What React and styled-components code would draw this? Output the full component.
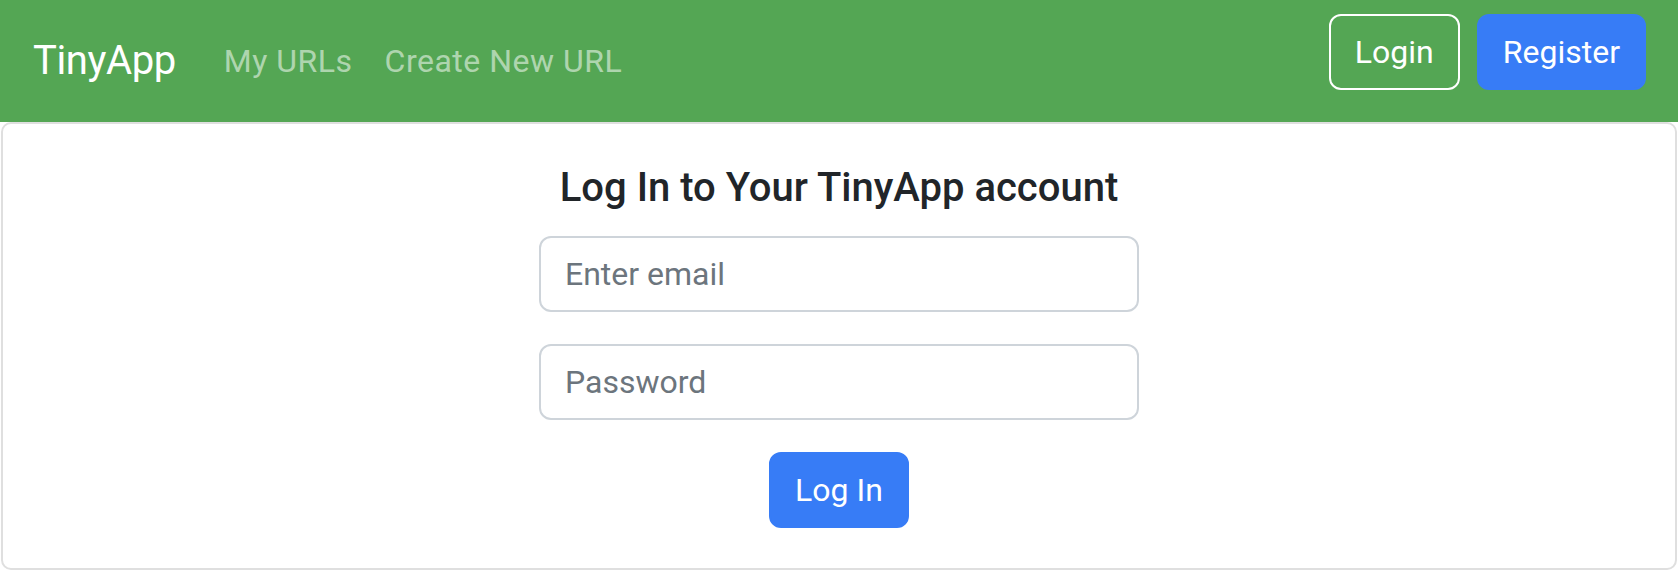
import React from "react";
import styled, { createGlobalStyle } from "styled-components";

const GlobalStyle = createGlobalStyle`
  html, body {
    margin: 0;
    padding: 0;
    background: #fff;
  }
  body {
    font-family: Roboto, "Liberation Sans", Arial, sans-serif;
    color: #212529;
  }
  * {
    box-sizing: border-box;
  }
`;

const App = () => {
  return (
    <>
      <GlobalStyle />
      <Navbar>
        <NavLeft>
          <Brand href="#">TinyApp</Brand>
          <NavLink href="#">My URLs</NavLink>
          <NavLink href="#">Create New URL</NavLink>
        </NavLeft>
        <NavRight>
          <OutlineButton>Login</OutlineButton>
          <PrimaryButton>Register</PrimaryButton>
        </NavRight>
      </Navbar>
      <Card>
        <Title>Log In to Your TinyApp account</Title>
        <Form onSubmit={(e) => e.preventDefault()}>
          <Input type="email" placeholder="Enter email" />
          <Input type="password" placeholder="Password" />
          <SubmitButton type="submit">Log In</SubmitButton>
        </Form>
      </Card>
    </>
  );
};

const Navbar = styled.nav`
  display: flex;
  justify-content: space-between;
  align-items: center;
  height: 122px;
  padding: 0 32px 0 33px;
  background: #54a654;
`;

const NavLeft = styled.div`
  display: flex;
  align-items: center;
`;

const Brand = styled.a`
  font-size: 40px;
  line-height: 60px;
  letter-spacing: -0.4px;
  padding: 10px 0;
  margin-right: 32px;
  color: #fff;
  text-decoration: none;
`;

const NavLink = styled.a`
  font-size: 32px;
  line-height: 48px;
  letter-spacing: 0.5px;
  padding: 16px;
  color: rgba(255, 255, 255, 0.55);
  text-decoration: none;
`;

const NavRight = styled.div`
  display: flex;
  gap: 17px;
  align-self: flex-start;
  padding-top: 14px;
`;

const Button = styled.button`
  font-family: inherit;
  font-size: 32px;
  line-height: 48px;
  padding: 12px 24px;
  border: 2px solid transparent;
  border-radius: 12px;
  color: #fff;
  background: none;
  cursor: pointer;
`;

const OutlineButton = styled(Button)`
  border-color: #fff;
`;

const PrimaryButton = styled(Button)`
  background: #377cf6;
  border-color: #377cf6;
`;

const Card = styled.main`
  margin: 0 1px;
  height: 448px;
  border: 2px solid #dfdfdf;
  border-radius: 10px;
  padding: 40px 20px;
  display: flex;
  flex-direction: column;
  align-items: center;
`;

const Title = styled.h5`
  margin: 0 0 24px;
  font-size: 40px;
  line-height: 48px;
  font-weight: 500;
  color: #212529;
`;

const Form = styled.form`
  display: flex;
  flex-direction: column;
  align-items: center;
  gap: 32px;
`;

const Input = styled.input`
  width: 600px;
  height: 76px;
  padding: 12px 24px;
  font-family: inherit;
  font-size: 32px;
  line-height: 48px;
  color: #212529;
  border: 2px solid #ced4da;
  border-radius: 12px;
  outline: none;
  &::placeholder {
    color: #6c757d;
  }
`;

const SubmitButton = styled(PrimaryButton)``;

export default App;
